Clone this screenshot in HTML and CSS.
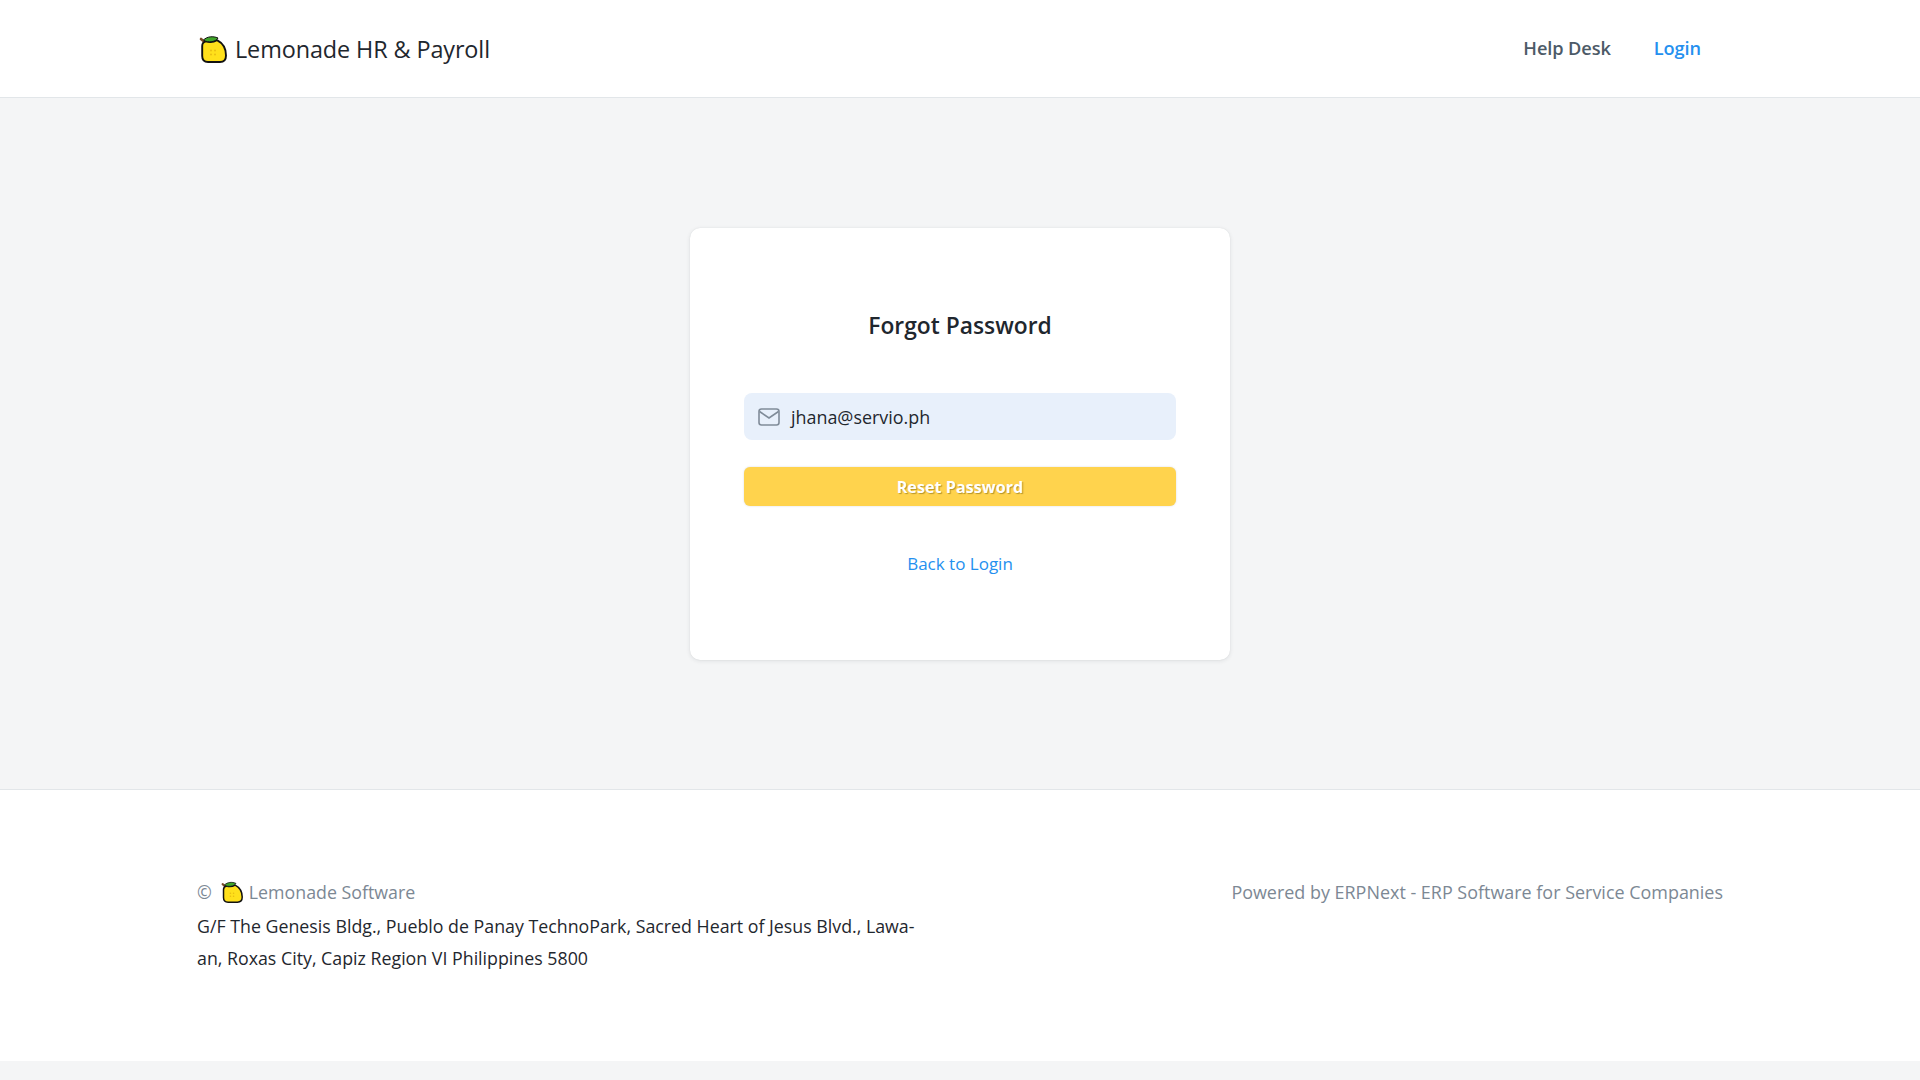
FILE: index.html
```html
<!DOCTYPE html>
<html lang="en">
<head>
<meta charset="utf-8">
<title>Forgot Password</title>
<link rel="stylesheet" href="styles.css">
</head>
<body>
<svg class="defs" width="0" height="0" aria-hidden="true">
  <symbol id="lemon" viewBox="0 0 28 28">
    <path d="M2 4 L5 6.5" stroke="#7a4a2a" stroke-width="2.6" stroke-linecap="round"/>
    <path d="M7 6.4 C10.5 7.5 15 7 18 5.2 C23.5 8 27 14 27 20.5 C27 24.8 24.6 27 21 27 L9 27 C5.5 27 3.2 25 3.2 21 L3.2 11 C3.2 8.5 5 6.8 7 6.4Z" fill="#ffe01b" stroke="#111" stroke-width="1.9" stroke-linejoin="round"/>
    <path d="M4.5 5 C8 1.5 14 .8 19 3 C17.5 6.5 9 8.6 4.5 5Z" fill="#3fa529" stroke="#111" stroke-width="1"/>
    <g fill="#e9bd12"><circle cx="12" cy="15.5" r="1"/><circle cx="16" cy="15.5" r="1"/><circle cx="12" cy="19.5" r="1"/><circle cx="16" cy="19.5" r="1"/></g>
  </symbol>
</svg>
<nav class="navbar">
  <div class="container nav-inner">
    <a class="brand" href="#"><svg class="brand-logo"><use href="#lemon"/></svg><span>Lemonade HR &amp; Payroll</span></a>
    <div class="nav-links">
      <a class="nav-link" href="#">Help Desk</a>
      <a class="nav-link active" href="#">Login</a>
    </div>
  </div>
</nav>
<main class="main">
  <section class="card">
    <h1 class="card-title">Forgot Password</h1>
    <form class="form">
      <div class="field">
        <svg class="field-icon" viewBox="0 0 22 18" fill="none" stroke="#808c99" stroke-width="1.6"><rect x="1" y="1" width="20" height="16" rx="2.5"/><path d="M1.5 3.5 L11 10 L20.5 3.5"/></svg>
        <span class="field-value">jhana@servio.ph</span>
      </div>
      <button class="btn" type="button">Reset Password</button>
    </form>
    <a class="back-link" href="#">Back to Login</a>
  </section>
</main>
<footer class="footer">
  <div class="container footer-inner">
    <div class="footer-left">
      <div class="footer-brand">© <svg class="footer-logo"><use href="#lemon"/></svg> Lemonade Software</div>
      <p class="address">G/F The Genesis Bldg., Pueblo de Panay TechnoPark, Sacred Heart of Jesus Blvd., Lawa-an, Roxas City, Capiz Region VI Philippines 5800</p>
    </div>
    <div class="footer-right">Powered by ERPNext - ERP Software for Service Companies</div>
  </div>
</footer>
</body>
</html>
```
FILE: styles.css
```css
* { box-sizing: border-box; }
html, body { margin: 0; padding: 0; }
body {
  min-height: 1080px;
  background: #f4f5f6;
  font-family: "Open Sans", "Noto Sans", sans-serif;
  color: #1f272e;
  display: flex;
  flex-direction: column;
}
a { text-decoration: none; }
.defs { position: absolute; }
.container { width: 1526px; margin: 0 auto; }
.navbar { height: 98px; background: #fff; border-bottom: 1px solid #e2e6e9; }
.nav-inner { height: 97px; display: flex; align-items: center; justify-content: space-between; padding: 0 22px 0 2px; }
.brand { display: flex; align-items: center; gap: 8px; color: #1f272e; font-size: 23.4px; letter-spacing: -0.1px; }
.brand-logo { width: 28px; height: 28px; }
.nav-links { display: flex; gap: 43px; margin-bottom: 2px; }
.nav-link { font-size: 18.2px; font-weight: 600; color: #4c5a67; letter-spacing: -0.1px; }
.nav-link.active { color: #2490ef; }
.main { height: 691px; display: flex; justify-content: center; padding-top: 130px; }
.card {
  width: 540px; height: 432px; background: #fff; border-radius: 10px;
  box-shadow: 0 1px 4px rgba(25, 39, 52, .1), 0 0 1px rgba(25, 39, 52, .12);
  padding: 0 54px; display: flex; flex-direction: column; align-items: center;
}
.card-title { margin: 80px 0 0; height: 36px; line-height: 36px; font-size: 22.8px; font-weight: 600; }
.form { width: 100%; margin-top: 49px; display: flex; flex-direction: column; gap: 27px; }
.field { height: 47px; background: #e8f0fb; border-radius: 8px; display: flex; align-items: center; padding-left: 14px; gap: 11px; }
.field-icon { width: 22px; height: 18px; margin-top: 1px; }
.field-value { font-size: 17.9px; color: #1f272e; }
.btn {
  height: 39px; border: 0; border-radius: 6px; background: #ffd34d; color: #fff;
  font: 700 16.2px "Open Sans", "Noto Sans", sans-serif; text-shadow: 1px 1px 1px rgba(90, 70, 0, .45);
  box-shadow: 0 0 2px rgba(25, 39, 52, .18);
}
.back-link { margin-top: 45px; font-size: 17px; line-height: 26px; color: #2490ef; }
.footer { height: 272px; background: #fff; border-top: 1px solid #e2e6e9; }
.footer-inner { display: flex; justify-content: space-between; padding-top: 87px; }
.footer-left { width: 740px; font-size: 17.8px; }
.footer-brand { height: 30px; line-height: 30px; color: #7c8894; display: flex; align-items: center; gap: 6px; }
.footer-logo { width: 22px; height: 22px; margin-left: 3px; }
.address { margin: 3px 0 0; line-height: 32px; }
.footer-right { font-size: 17.95px; line-height: 30px; color: #7c8894; }
```
